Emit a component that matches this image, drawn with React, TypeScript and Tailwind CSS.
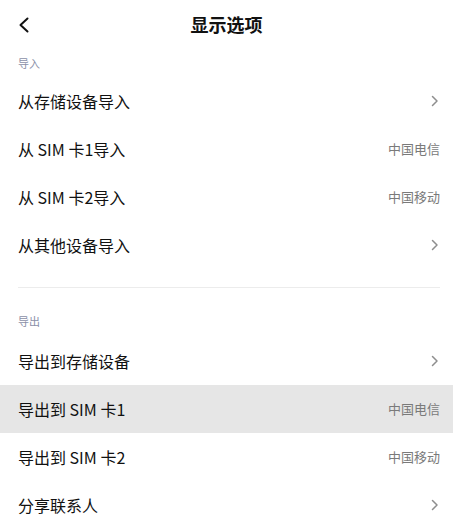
type Row = { label: string; extra?: string; active?: boolean };

const importRows: Row[] = [
  { label: '从存储设备导入' },
  { label: '从 SIM 卡1导入', extra: '中国电信' },
  { label: '从 SIM 卡2导入', extra: '中国移动' },
  { label: '从其他设备导入' },
];

const exportRows: Row[] = [
  { label: '导出到存储设备' },
  { label: '导出到 SIM 卡1', extra: '中国电信', active: true },
  { label: '导出到 SIM 卡2', extra: '中国移动' },
  { label: '分享联系人' },
];

const font = { fontFamily: '"Noto Sans CJK SC", "Noto Sans", sans-serif' };

const Arrow = () => (
  <svg width="8" height="12" viewBox="0 0 8 12" fill="none" className="mr-[1px]">
    <path d="M1.5 1.5 6 6l-4.5 4.5" stroke="#8e8e8e" strokeWidth="1.5" strokeLinecap="round" strokeLinejoin="round" />
  </svg>
);

const ListRow = ({ row }: { row: Row }) => (
  <div className={`h-12 flex items-center justify-between pl-[18px] pr-[13px] ${row.active ? 'bg-[#e6e6e6]' : ''}`}>
    <span className="text-[16px] text-[#111]">{row.label}</span>
    {row.extra ? <span className="text-[13px] text-[#7a7a7a]">{row.extra}</span> : <Arrow />}
  </div>
);

const App = () => {
  return (
    <div className="w-[453px] h-[524px] overflow-hidden bg-white" style={font}>
      {/* Header */}
      <div className="h-12 relative flex items-center justify-center">
        <svg width="12" height="16" viewBox="0 0 12 16" fill="none" className="absolute left-[18px] top-[17px]">
          <path d="M9.5 1.5 2.5 8l7 6.5" stroke="#111" strokeWidth="2" strokeLinecap="round" strokeLinejoin="round" />
        </svg>
        <h1 className="text-[18px] font-bold text-[#111]">显示选项</h1>
      </div>

      {/* Import */}
      <div className="h-[29px] flex items-center px-[18px] pt-[1px]">
        <span className="text-[11px] text-[#8b90a8]">导入</span>
      </div>
      {importRows.map((row, idx) => (
        <ListRow key={idx} row={row} />
      ))}

      <div className="pt-[18px] pl-[18px] pr-[13px]">
        <div className="h-px bg-[#ececec]" />
      </div>

      {/* Export */}
      <div className="h-[49px] flex items-end pb-[8px] px-[18px]">
        <span className="text-[11px] text-[#8b90a8]">导出</span>
      </div>
      {exportRows.map((row, idx) => (
        <ListRow key={idx} row={row} />
      ))}
    </div>
  );
};

export default App;
